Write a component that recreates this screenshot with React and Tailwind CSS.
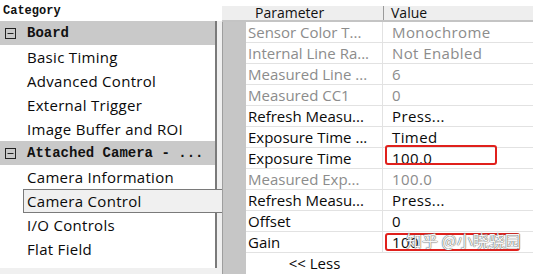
const tree = [
  { label: "Board", group: true },
  { label: "Basic Timing" },
  { label: "Advanced Control" },
  { label: "External Trigger" },
  { label: "Image Buffer and ROI" },
  { label: "Attached Camera - ...", group: true },
  { label: "Camera Information" },
  { label: "Camera Control", selected: true },
  { label: "I/O Controls" },
  { label: "Flat Field" },
];

const params = [
  { name: "Sensor Color T...", value: "Monochrome", dim: true },
  { name: "Internal Line Ra...", value: "Not Enabled", dim: true },
  { name: "Measured Line ...", value: "6", dim: true },
  { name: "Measured CC1", value: "0", dim: true },
  { name: "Refresh Measu...", value: "Press..." },
  { name: "Exposure Time ...", value: "Timed" },
  { name: "Exposure Time", value: "100.0", mark: "exp" },
  { name: "Measured Exp...", value: "100.0", dim: true },
  { name: "Refresh Measu...", value: "Press..." },
  { name: "Offset", value: "0" },
  { name: "Gain", value: "100", mark: "gain" },
];

function MinusBox() {
  return (
    <svg width="11" height="11" viewBox="0 0 11 11" className="shrink-0">
      <rect x="0.5" y="0.5" width="10" height="10" fill="none" stroke="#222" />
      <line x1="2.5" y1="5.5" x2="8.5" y2="5.5" stroke="#222" />
    </svg>
  );
}

function TreeRow({ item }) {
  if (item.selected) {
    return (
      <div className="flex h-[24px] w-[222px]">
        <div className="w-[23px] bg-white" />
        <div className="flex flex-1 items-center border-y border-l border-[#7a7a7a] bg-[#f0f0f0] pl-[3px] text-[15px] tracking-[0.3px] text-[#0a0a0a]">
          {item.label}
        </div>
      </div>
    );
  }
  if (item.group) {
    return (
      <div className="flex h-[24px] w-[217px] items-center gap-[11px] border-r-2 border-[#7a7a7a] bg-[#c9c9c9] pl-[5px]">
        <MinusBox />
        <span className="font-['Liberation_Mono',monospace] text-[14px] font-bold text-[#111]">
          {item.label}
        </span>
      </div>
    );
  }
  return (
    <div className="flex h-[24px] w-[217px] items-center border-r-2 border-[#7a7a7a] bg-white pl-[27px] text-[15px] tracking-[0.3px] text-[#0a0a0a]">
      {item.label}
    </div>
  );
}

export default function App() {
  return (
    <div className="flex h-[274px] w-[548px] overflow-hidden bg-white font-['Open_Sans',sans-serif] leading-none">
      {/* category tree */}
      <div className="flex w-[222px] flex-col bg-[#f0f0f0]">
        <div className="flex h-[21px] items-center bg-white pl-[3px] font-['Liberation_Mono',monospace] text-[12px] font-bold text-[#111]">
          Category
        </div>
        {tree.map((item, i) => (
          <TreeRow key={i} item={item} />
        ))}
        <div className="h-[7px] w-[217px] border-r-2 border-[#7a7a7a] bg-white" />
      </div>

      {/* property grid */}
      <div className="flex w-[311px] flex-col">
        <div className="h-[6px] bg-white" />
        <div className="grid h-[16px] grid-cols-[24px_137px_150px] border-b-2 border-[#c4c4c4] bg-[#eeeeee] text-[14px] text-[#111]">
          <div />
          <div className="flex items-center pl-[9px]">Parameter</div>
          <div className="flex items-center border-l border-[#9a9a9a] pl-[7px]">Value</div>
        </div>
        <div className="relative flex flex-1">
          <div className="w-[24px] border-l border-[#9e9e9e] bg-[#c6c6c6]" />
          <div className="flex flex-1 flex-col">
            {params.map((p, i) => (
              <div
                key={i}
                className={`grid h-[21px] grid-cols-[137px_150px] border-b border-[#e2e2e2] text-[15px] ${
                  p.dim ? "text-[#8c8c8c]" : "text-[#0a0a0a]"
                }`}
              >
                <div className="flex items-center overflow-hidden whitespace-nowrap border-r border-[#e2e2e2] bg-white pl-[2px]">
                  {p.name}
                </div>
                <div className="relative flex items-center bg-white pl-[9px] tracking-[0.4px]">
                  {p.value}
                  {p.mark === "exp" && (
                    <div className="absolute left-[2px] top-[-3px] h-[20px] w-[112px] rounded-[3px] border-2 border-[#e0201c]" />
                  )}
                  {p.mark === "gain" && (
                    <div className="absolute left-[2px] top-[1px] h-[18px] w-[135px] rounded-[3px] border-2 border-[#e0201c]" />
                  )}
                </div>
              </div>
            ))}
            <div className="grid h-[21px] grid-cols-[137px_150px] text-[15px] text-[#0a0a0a]">
              <div className="flex items-center justify-center bg-white">&lt;&lt; Less</div>
              <div className="bg-white" />
            </div>
          </div>
          <div className="absolute left-[184px] top-[210px] font-['Noto_Sans_CJK_SC',sans-serif] text-[16px] text-[#f6f6f6] [text-shadow:0_0_1px_#555,0_0_1px_#555]">
            知乎 @小晓骁园
          </div>
        </div>
      </div>
      <div className="flex-1 bg-white" />
    </div>
  );
}
